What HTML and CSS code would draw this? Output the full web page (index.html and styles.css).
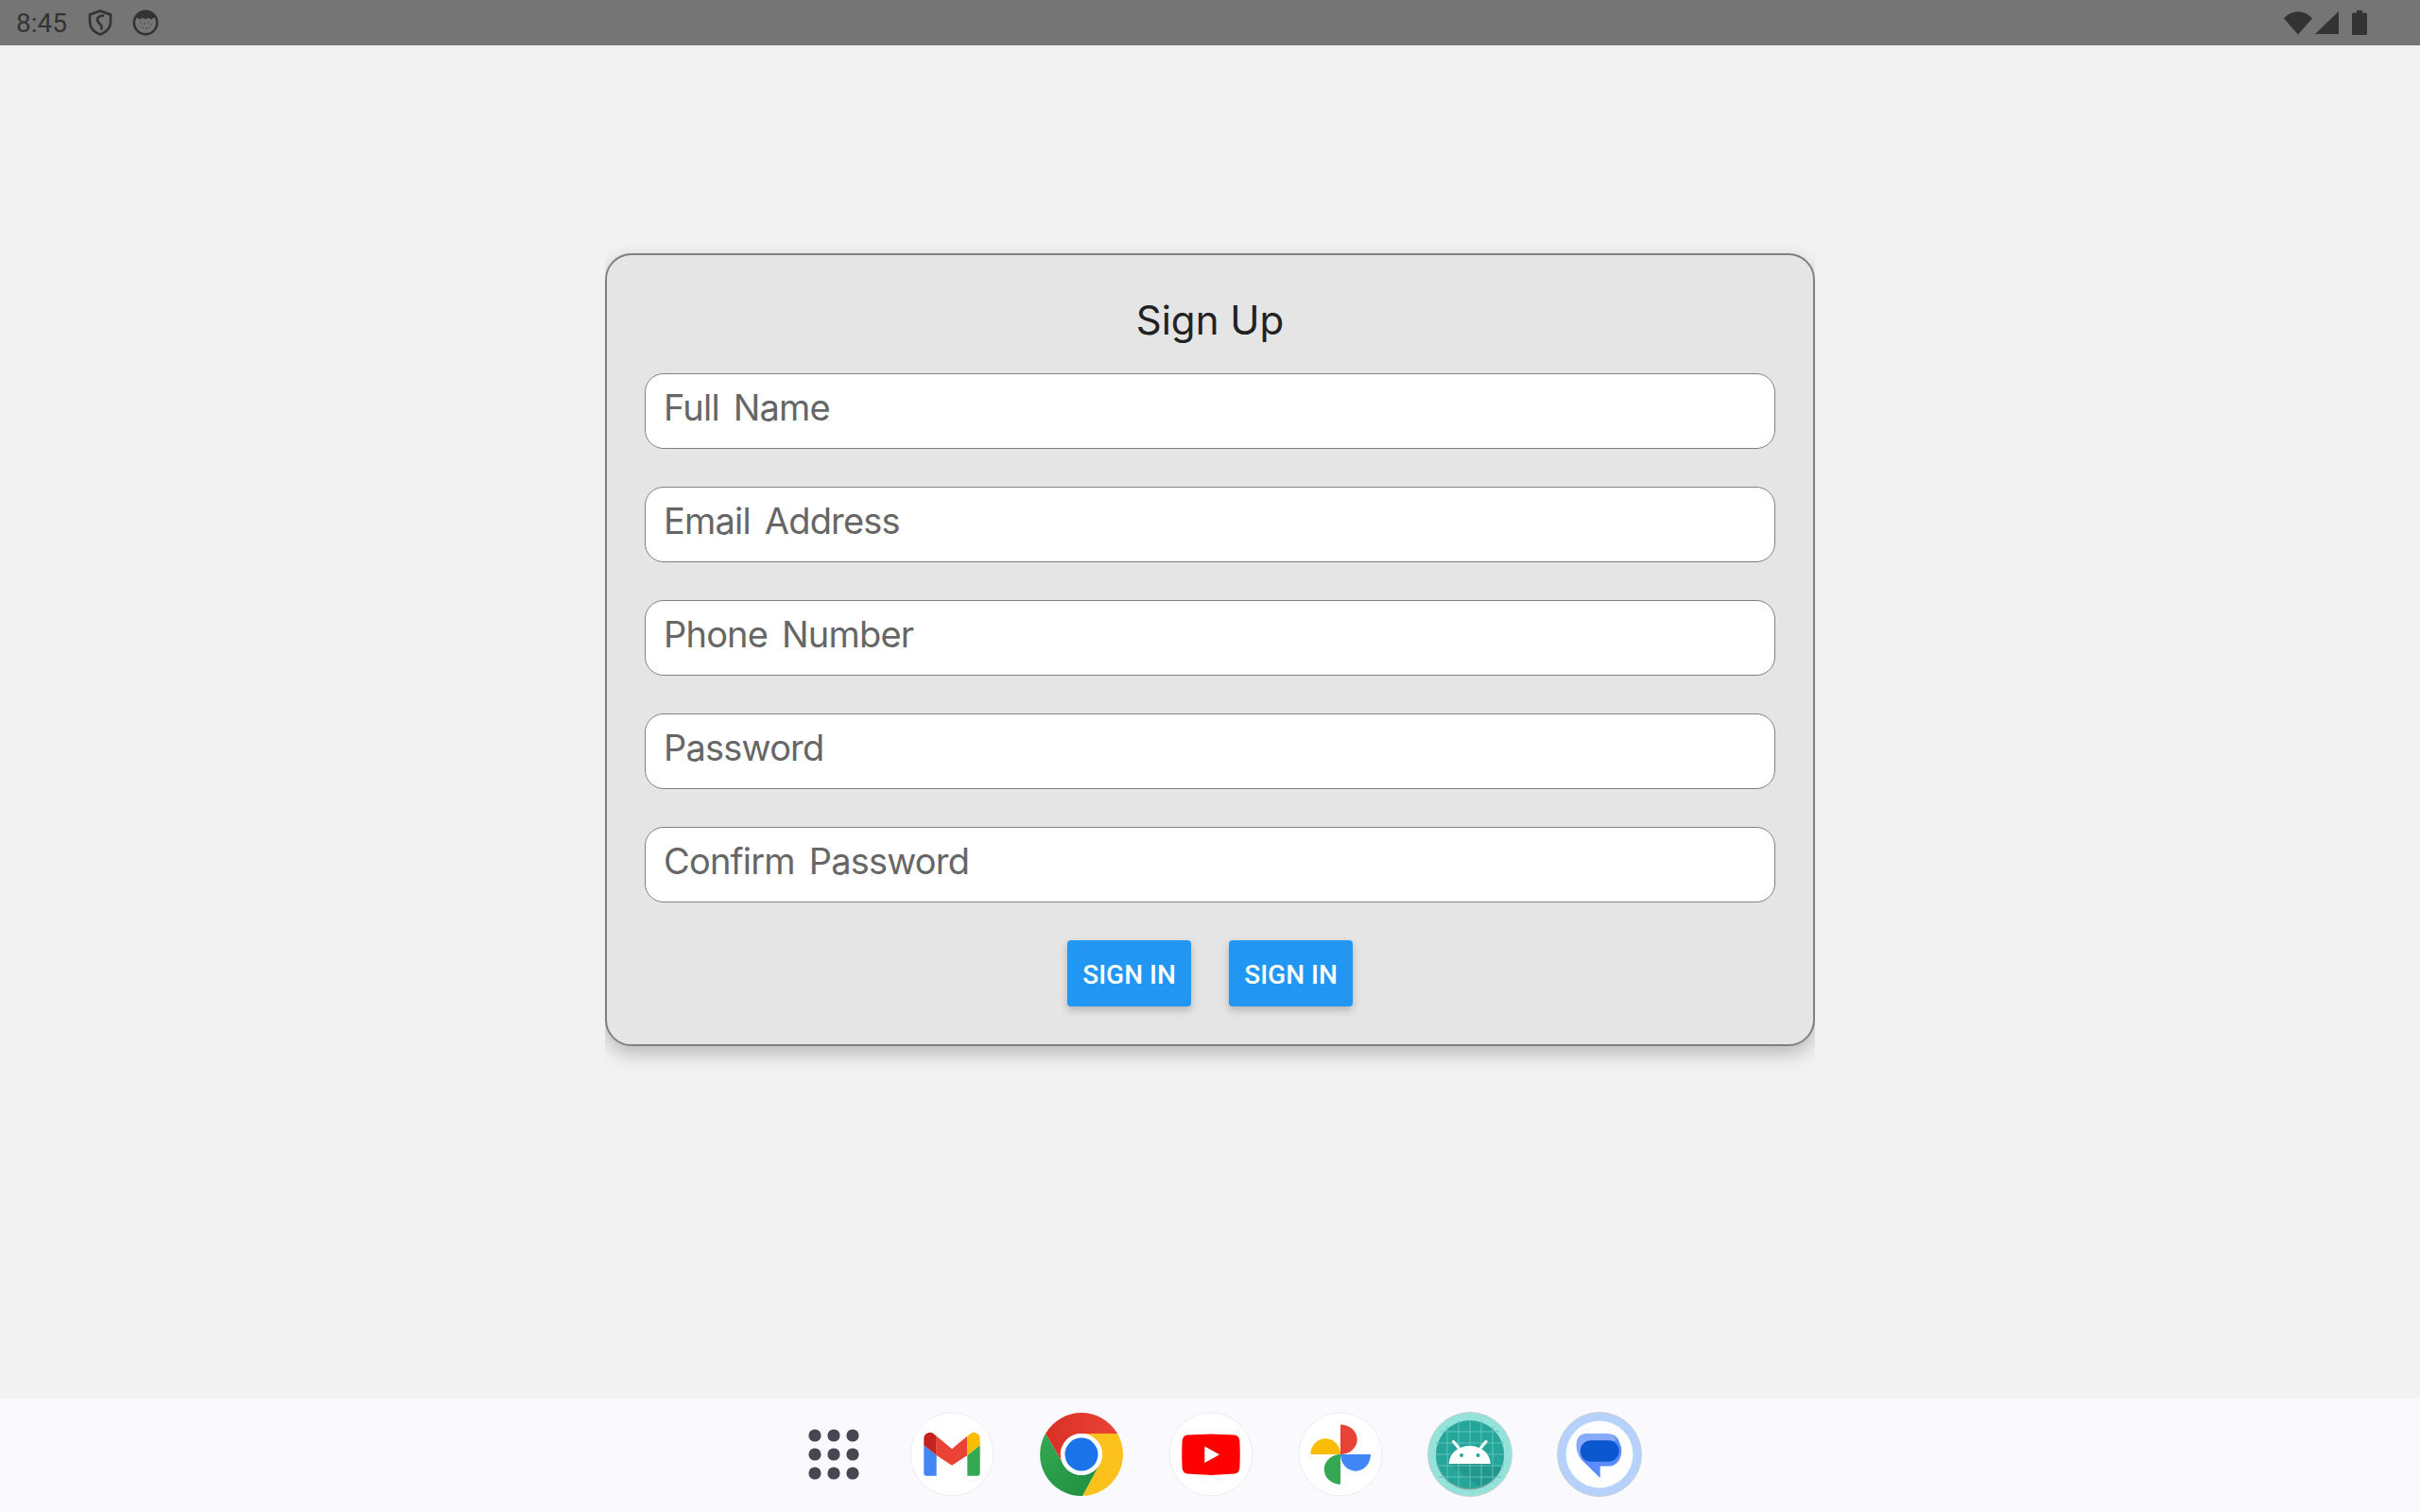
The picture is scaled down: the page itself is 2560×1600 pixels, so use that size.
FILE: index.html
```html
<!DOCTYPE html>
<html lang="en">
<head>
<meta charset="utf-8">
<title>Sign Up</title>
<link rel="stylesheet" href="styles.css">
</head>
<body>
<div class="screen">
  <header class="status">
    <div class="status-left">
      <span class="clock">8:45</span>
      <svg class="si" viewBox="0 0 28 28"><path d="M14 1.500 25 5.500V13c0 6.500-4.500 11-11 13.500C7.500 24 3 19.500 3 13V5.500Z" fill="none" stroke="#333" stroke-width="2.600"/><path d="M18 6.500C12 6 9.500 10 12 13.500c2 2.500 5 4 3 8" fill="none" stroke="#333" stroke-width="2.600"/></svg>
      <svg class="si" viewBox="0 0 28 28"><circle cx="14" cy="14" r="12.200" fill="none" stroke="#333" stroke-width="2.600"/><path d="M4 8.500C6 4 10 2 14 2s8 2 10 6.500c-3 .5-3 2-4 2-1.500 0-1-1.500-2.500-1.500S16 10 14 10s-2-1-3.500-1-1 1.500-2.500 1.500c-1 0-1-1.500-4-2Z" fill="#333"/><g fill="#444"><circle cx="9" cy="14" r=".8"/><circle cx="13" cy="15" r=".8"/><circle cx="17" cy="14" r=".8"/><circle cx="20" cy="16" r=".8"/><circle cx="11" cy="19" r=".8"/><circle cx="15" cy="20" r=".8"/><circle cx="18" cy="19" r=".8"/></g></svg>
    </div>
    <div class="status-right">
      <svg class="wifi" viewBox="0 0 30 25"><path d="M0 7.500C4 3 9 .5 15 .5S26 3 30 7.500L15 24.500Z" fill="#333"/></svg>
      <svg class="signal" viewBox="0 0 25 24"><path d="M25 0V24H0Z" fill="#333"/></svg>
      <svg class="battery" viewBox="0 0 16 26"><path d="M5 0h6v2.500h3.500A1.500 1.500 0 0 1 16 4v20.500a1.500 1.500 0 0 1-1.500 1.500h-13A1.500 1.500 0 0 1 0 24.500V4a1.500 1.500 0 0 1 1.500-1.500H5Z" fill="#333"/></svg>
    </div>
  </header>

  <main class="content">
    <section class="card">
      <h1 class="title">Sign Up</h1>
      <form class="form">
        <input class="field" type="text" placeholder="Full Name">
        <input class="field" type="text" placeholder="Email Address">
        <input class="field" type="text" placeholder="Phone Number">
        <input class="field" type="text" placeholder="Password">
        <input class="field" type="text" placeholder="Confirm Password">
        <div class="actions">
          <button class="btn" type="button">SIGN IN</button>
          <button class="btn" type="button">SIGN IN</button>
        </div>
      </form>
    </section>
  </main>

  <footer class="dock">
    <svg class="app-grid" viewBox="0 0 54 54"><g fill="#474751"><circle cx="7" cy="7" r="6.600"/><circle cx="27" cy="7" r="6.600"/><circle cx="47" cy="7" r="6.600"/><circle cx="7" cy="27" r="6.600"/><circle cx="27" cy="27" r="6.600"/><circle cx="47" cy="27" r="6.600"/><circle cx="7" cy="47" r="6.600"/><circle cx="27" cy="47" r="6.600"/><circle cx="47" cy="47" r="6.600"/></g></svg>

    <svg class="app" viewBox="0 0 90 90"><circle cx="45" cy="45" r="44" fill="#fff" stroke="#ebebf1"/>
      <path d="M15.300 35.300 28.700 46V67.700H18.300A3 3 0 0 1 15.300 64.700Z" fill="#4285f4"/>
      <path d="M74.700 35.300 61.300 46V67.700H71.700A3 3 0 0 0 74.700 64.700Z" fill="#34a853"/>
      <path d="M28.700 25.700 45 39.300 61.300 25.700V46L45 56.700 28.700 46Z" fill="#ea4335"/>
      <path d="M15.300 35.300V28.500C15.300 22 22.500 20.500 26 23.500L28.700 25.700V46Z" fill="#c5221f"/>
      <path d="M74.700 35.300V28.500C74.700 22 67.500 20.500 64 23.500L61.300 25.700V46Z" fill="#fbbc04"/>
    </svg>

    <svg class="app" viewBox="0 0 90 90">
      <defs>
        <linearGradient id="chromeRed" x1="0" y1="0" x2="1" y2="0"><stop offset="0" stop-color="#d93025"/><stop offset="1" stop-color="#ea4335"/></linearGradient>
        <linearGradient id="chromeGreen" x1="0" y1="0" x2="1" y2="1"><stop offset="0" stop-color="#34a853"/><stop offset="1" stop-color="#1e8e3e"/></linearGradient>
      </defs>
      <path d="M7 23A44 44 0 0 1 83.100 23H45A22 22 0 0 0 25.900 56Z" fill="url(#chromeRed)"/>
      <path d="M83.100 23A44 44 0 0 1 46 89L64 56A22 22 0 0 0 45 23Z" fill="#fcc11b"/>
      <path d="M7 23A44 44 0 0 0 46 89L64 56A22 22 0 0 1 25.900 56Z" fill="url(#chromeGreen)"/>
      <circle cx="45" cy="45" r="22" fill="#fff"/><circle cx="45" cy="45" r="17.500" fill="#1a73e8"/>
    </svg>

    <svg class="app" viewBox="0 0 90 90"><circle cx="45" cy="45" r="44" fill="#fff" stroke="#ebebf1"/>
      <path d="M20 24.500 45 23.500l25 1c3 .3 5 2.500 5.300 5.500.6 10 .6 20 0 30-.3 3-2.300 5.200-5.300 5.500L45 67l-25-1.500c-3-.3-5-2.500-5.300-5.500-.6-10-.6-20 0-30 .3-3 2.300-5.200 5.300-5.500Z" fill="#f00"/>
      <path d="M38.300 36.500 54 45.300 38.300 54Z" fill="#fff"/>
    </svg>

    <svg class="app" viewBox="0 0 90 90"><circle cx="45" cy="45" r="44" fill="#fff" stroke="#ebebf1"/>
      <path d="M45 13.500a17.700 15.750 0 0 1 0 31.500Z" fill="#ea4335"/>
      <path d="M13.400 45a15.800 16.700 0 0 1 31.600 0Z" fill="#fbbc04"/>
      <path d="M45 45a17.300 15.850 0 0 0 0 31.700Z" fill="#34a853"/>
      <path d="M45 45H77a16 17.700 0 0 1-32 0Z" fill="#4285f4"/>
    </svg>

    <svg class="app" viewBox="0 0 90 90">
      <circle cx="45" cy="45" r="44.500" fill="#93e3db" stroke="#c9cfcd"/>
      <circle cx="45" cy="46.500" r="36" fill="#555" opacity=".45"/>
      <circle cx="45" cy="45" r="36" fill="#26a69a"/>
      <path d="M23 55H67L78 60A36 36 0 0 1 55 79.600Z" fill="#1f9085" opacity=".6"/>
      <g stroke="#5fc2b8" stroke-width="1"><path d="M9 33H81M9 45H81M9 57H81M12 69H78M14 21H76M33 9V81M45 9V81M57 9V81M21 15V75M69 15V75"/></g>
      <path d="M22.700 55a22 19 0 0 1 44 0Z" fill="#fff"/>
      <path d="M33 38 27.500 31.500M56.500 38 62 31.500" stroke="#fff" stroke-width="3" stroke-linecap="round"/>
      <circle cx="36" cy="46" r="2" fill="#26a69a"/><circle cx="53.500" cy="46" r="2" fill="#26a69a"/>
    </svg>

    <svg class="app" viewBox="0 0 90 90">
      <circle cx="45" cy="45" r="44.500" fill="#b6d1fb" stroke="#c9cfcd"/>
      <circle cx="45" cy="45" r="35.500" fill="#fff"/>
      <path d="M31 23.300H52C60 23.300 64 26 66 32 67.500 35 68.300 38 68.300 41 68.300 50 63 57.500 55 57.500H45.700V70L26.300 51C22.500 46 20.700 41 20.700 35 20.700 28 25 23.300 31 23.300Z" fill="#5b8cff"/>
      <path d="M31 23.300H52C58 23.300 62 26 63 30.500H36C29 30.500 25 36 25 42 25 44.500 25.500 47 26.500 49 22.500 45 20.700 41 20.700 35 20.700 28 25 23.300 31 23.300Z" fill="#87aafc"/>
      <rect x="24.700" y="30.300" width="41" height="22.400" rx="11.200" fill="#0b57d0"/>
    </svg>
  </footer>
</div>
</body>
</html>
```
FILE: styles.css
```css
* { box-sizing: border-box; }
html, body { margin: 0; padding: 0; }
body { background: #f2f2f2; font-family: Roboto, "Liberation Sans", sans-serif; }

.screen { width: 2560px; height: 1600px; display: flex; flex-direction: column; overflow: hidden; }

.status { height: 48px; flex: none; background: #757575; display: flex; justify-content: space-between; align-items: center; padding: 0 56px 0 17px; color: #333; }
.status-left { display: flex; align-items: center; }
.clock { font-size: 28px; width: 75px; }
.si { width: 28px; height: 28px; margin-right: 20px; }
.status-right { display: flex; align-items: center; }
.wifi { width: 30px; height: 25px; }
.signal { width: 25px; height: 24px; margin-left: 3px; }
.battery { width: 16px; height: 26px; margin-left: 14px; }

.content { flex: 1; padding-top: 220px; background: #f2f2f2; }

.card { width: 1280px; height: 839px; margin-left: 640px; border: 2px solid #808080; border-radius: 28px; background: #e5e5e5; box-shadow: 0 8px 20px rgba(0, 0, 0, .24); clip-path: inset(-40px 0 -40px 0); padding: 0 40px; }
.title { margin: 0; height: 125px; padding-top: 39px; text-align: center; font-family: Inter, sans-serif; font-weight: 400; font-size: 42px; line-height: 60px; color: #222; }

.form { display: flex; flex-direction: column; gap: 40px; }
.field { display: block; width: 1196px; height: 80px; background: #fff; border: 1px solid #808080; border-radius: 20px; padding: 0 19px 8px; font-family: Inter, sans-serif; font-size: 38px; letter-spacing: -.8px; word-spacing: 5px; outline: none; }
.field::placeholder { color: #666; opacity: 1; }

.actions { display: flex; justify-content: center; gap: 40px; }
.btn { width: 131px; height: 70px; background: #2196f3; color: #fff; border: 0; border-radius: 4px; font-family: Roboto, sans-serif; font-weight: 500; font-size: 28px; padding: 2px 0 0; box-shadow: 0 4px 8px rgba(0, 0, 0, .22); }

.dock { height: 120px; flex: none; background: #f9f9fe; display: flex; align-items: center; padding: 0 0 2px 855px; }
.app-grid { width: 54px; height: 54px; margin-right: 53px; }
.app { width: 90px; height: 90px; margin-right: 47px; flex: none; }
```
